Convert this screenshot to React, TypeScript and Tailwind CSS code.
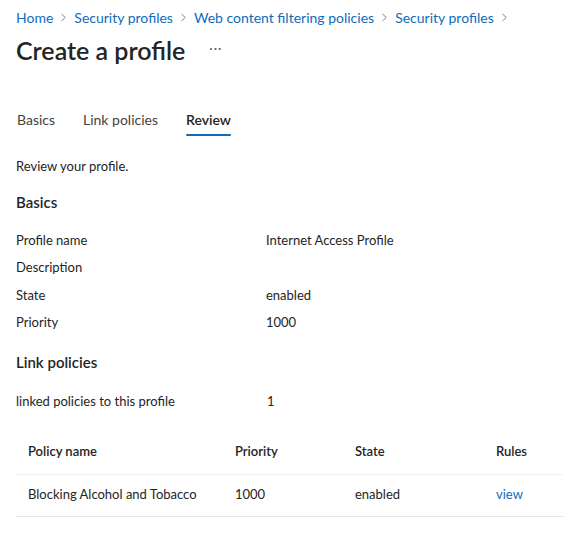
import { ChevronRight } from "lucide-react";

const crumbs = ["Home", "Security profiles", "Web content filtering policies", "Security profiles"];

const basics = [
  { label: "Profile name", value: "Internet Access Profile" },
  { label: "Description", value: "" },
  { label: "State", value: "enabled" },
  { label: "Priority", value: "1000" },
];

const App = () => {
  return (
    <div className="min-h-screen w-[577px] bg-white text-[#242424] font-['Lato',sans-serif]">
      <div className="px-4 pt-[7px]">
        <nav className="flex items-center text-[14px] text-[#0f6cbd] h-[20px]">
          {crumbs.map((c, i) => (
            <span key={i} className="flex items-center">
              <span>{c}</span>
              <ChevronRight className="mx-[4px] h-[13px] w-[13px] text-[#616161]" strokeWidth={1.5} />
            </span>
          ))}
        </nav>

        <div className="mt-[7px] flex items-center h-[32px]">
          <h1 className="text-[25px] font-semibold leading-none">Create a profile</h1>
          <span className="ml-[24px] text-[13px] text-[#616161] tracking-[1px] -mt-[2px]">···</span>
        </div>

        <div className="mt-[44px] flex text-[14px] h-[26px]">
          <div className="w-[67px] pl-[1px] leading-[20px] text-[#424242]">Basics</div>
          <div className="w-[103px] leading-[20px] text-[#424242]">Link policies</div>
          <div className="relative leading-[20px] font-semibold">
            Review
            <span className="absolute left-0 right-0 bottom-0 h-[2px] bg-[#0f6cbd] rounded-sm" />
          </div>
        </div>

        <p className="mt-[21px] text-[13px] leading-[18px]">Review your profile.</p>

        <h2 className="mt-[17px] text-[15px] font-semibold leading-[20px]">Basics</h2>

        <div className="mt-[15px] flex flex-col text-[13px]">
          {basics.map((r) => (
            <div key={r.label} className="flex h-[27.4px] items-center">
              <span className="w-[250px]">{r.label}</span>
              <span>{r.value}</span>
            </div>
          ))}
        </div>

        <h2 className="mt-[15px] text-[15px] font-semibold leading-[20px]">Link policies</h2>

        <div className="mt-[20px] flex text-[13px] items-center h-[20px]">
          <span className="w-[251px]">linked policies to this profile</span>
          <span>1</span>
        </div>

        <div className="mt-[18px] w-[547px] text-[13px]">
          <div className="grid grid-cols-[207px_120px_141px_1fr] h-[45px] items-center px-3 font-semibold border-b border-[#f0f0f0]">
            <span>Policy name</span>
            <span>Priority</span>
            <span>State</span>
            <span>Rules</span>
          </div>
          <div className="grid grid-cols-[207px_120px_141px_1fr] h-[42px] items-center px-3 border-b border-[#e8e8e8]">
            <span>Blocking Alcohol and Tobacco</span>
            <span>1000</span>
            <span>enabled</span>
            <span className="text-[#0f6cbd]">view</span>
          </div>
        </div>
      </div>
    </div>
  );
};

export default App;
